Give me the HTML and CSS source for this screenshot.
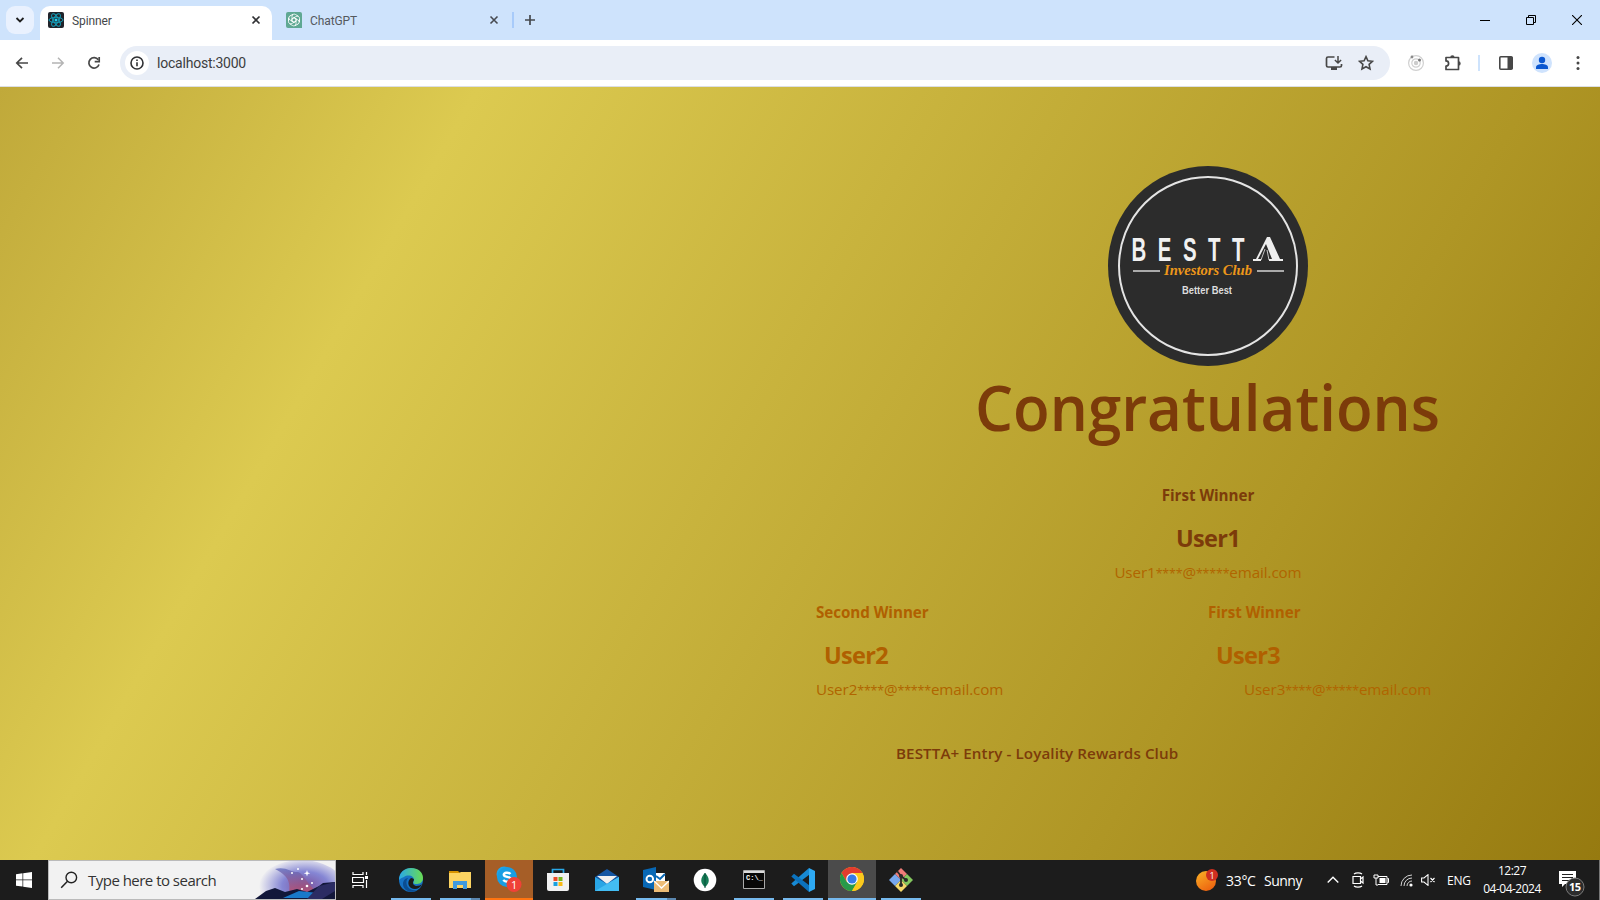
FILE: index.html
```html
<!DOCTYPE html>
<html lang="en">
<head>
<meta charset="utf-8">
<title>Spinner</title>
<link rel="stylesheet" href="styles.css">
</head>
<body>
<div class="screen">
  <header class="tabbar">
    <div class="tabsearch"><svg width="10" height="10" viewBox="0 0 10 10"><path d="M1.5 3l3.5 3.5L8.500 3" fill="none" stroke="#1f1f1f" stroke-width="1.8"/></svg></div>
    <div class="tab active">
      <svg width="16" height="16" viewBox="0 0 16 16"><rect width="16" height="16" rx="2" fill="#20232a"/><g fill="none" stroke="#149db8" stroke-width="1"><ellipse cx="8" cy="8" rx="7" ry="2.700"/><ellipse cx="8" cy="8" rx="7" ry="2.700" transform="rotate(60 8 8)"/><ellipse cx="8" cy="8" rx="7" ry="2.700" transform="rotate(120 8 8)"/></g><circle cx="8" cy="8" r="1.500" fill="#20d3f5"/></svg>
      <span class="tabname">Spinner</span>
      <svg width="10" height="10" viewBox="0 0 10 10"><path d="M1.500 1.500l7 7M8.500 1.500l-7 7" stroke="#303134" stroke-width="1.700"/></svg>
    </div>
    <div class="tab idle">
      <svg width="16" height="16" viewBox="0 0 16 16"><path d="M2 0h12a2 2 0 0 1 2 2v14H2a2 2 0 0 1-2-2V2a2 2 0 0 1 2-2z" fill="#5fa893"/><g fill="none" stroke="#fff" stroke-width=".85"><path id="p" d="M6 5.200V4.300a2.300 2.300 0 0 1 3.500-1.800L12.500 4.300M6 5.200v4l2 1.200"/><use href="#p" transform="rotate(60 8 8)"/><use href="#p" transform="rotate(120 8 8)"/><use href="#p" transform="rotate(180 8 8)"/><use href="#p" transform="rotate(240 8 8)"/><use href="#p" transform="rotate(300 8 8)"/></g></svg>
      <span class="tabname">ChatGPT</span>
      <svg width="10" height="10" viewBox="0 0 10 10"><path d="M1.500 1.500l7 7M8.500 1.500l-7 7" stroke="#474a50" stroke-width="1.600"/></svg>
    </div>
    <i class="tabsep"></i>
    <svg class="plus" width="12" height="12" viewBox="0 0 12 12"><path d="M6 1v10M1 6h10" stroke="#45494e" stroke-width="1.700"/></svg>
    <div class="winbtns">
      <svg width="10" height="10" viewBox="0 0 10 10"><path d="M0 5.500h10" stroke="#000"/></svg>
      <svg width="10" height="10" viewBox="0 0 10 10"><path d="M.5 2.500h7v7h-7zM2.500 2.500v-2h7v7h-2" fill="none" stroke="#000"/></svg>
      <svg width="10" height="10" viewBox="0 0 10 10"><path d="M0 0l10 10M10 0L0 10" stroke="#000" stroke-width="1.100"/></svg>
    </div>
  </header>
  <nav class="toolbar">
    <svg class="back" width="14" height="14" viewBox="0 0 14 14"><path d="M13 7H2.500M7 1.800L1.800 7 7 12.200" fill="none" stroke="#474747" stroke-width="1.700"/></svg>
    <svg class="fwd" width="14" height="14" viewBox="0 0 14 14"><path d="M1 7h10.500M7 1.800L12.200 7 7 12.200" fill="none" stroke="#b4b4b4" stroke-width="1.500"/></svg>
    <svg class="reload" width="14" height="14" viewBox="0 0 14 14"><path d="M11.300 3.800A5.200 5.200 0 1 0 12 8.500" fill="none" stroke="#474747" stroke-width="1.700"/><path d="M12.200 1v4.700H7.700" fill="none" stroke="#474747" stroke-width="1.700"/></svg>
    <div class="omnibox">
      <div class="info"><svg width="14" height="14" viewBox="0 0 14 14"><circle cx="7" cy="7" r="6" fill="none" stroke="#303134" stroke-width="1.600"/><path d="M7 6.200v4M7 3.600v1.500" stroke="#303134" stroke-width="1.600"/></svg></div>
      <span class="url">localhost:3000</span>
      <svg class="install" width="18" height="16" viewBox="0 0 18 16"><path d="M9.500 2H3a1.500 1.500 0 0 0-1.500 1.500v7A1.500 1.500 0 0 0 3 12h12a1.500 1.500 0 0 0 1.500-1.500V9" fill="none" stroke="#474747" stroke-width="1.700"/><path d="M6 12h6v3H6z" fill="#474747"/><path d="M13 1v7M9.900 5l3.100 3 3.100-3" fill="none" stroke="#474747" stroke-width="1.500"/></svg>
      <svg class="star" width="16" height="16" viewBox="0 0 16 16"><path d="M8 1.700l1.900 4.100 4.500.5-3.300 3.100.9 4.500L8 11.700l-4 2.200.9-4.500-3.300-3.100 4.500-.5z" fill="none" stroke="#474747" stroke-width="1.600"/></svg>
    </div>
    <svg class="ext" width="18" height="18" viewBox="0 0 18 18"><g fill="none" stroke="#d0d0d0" stroke-width="1.200"><circle cx="9" cy="9" r="7.400"/><circle cx="9" cy="9" r="4.200"/></g><circle cx="9" cy="9" r="2.200" fill="#ccc"/><circle cx="5" cy="3" r="1.400" fill="#8a8a8a"/><circle cx="12.500" cy="6" r="1.500" fill="#777"/></svg>
    <svg class="puzzle" width="18" height="18" viewBox="0 0 18 18"><path d="M2 3.500h12.500v12H2v-3.400a2.600 2.600 0 0 0 0-5.200z" fill="none" stroke="#474747" stroke-width="1.700" stroke-linejoin="round"/><path d="M6.200 3.500a2.200 2.200 0 0 1 4.400 0M14.500 7.200a2.200 2.200 0 0 1 0 4.400" fill="#474747"/></svg>
    <i class="toolsep"></i>
    <svg class="panel" width="14" height="14" viewBox="0 0 14 14"><rect x=".8" y=".8" width="12.400" height="12.400" rx="1" fill="none" stroke="#474747" stroke-width="1.600"/><path d="M8.500 1h5v12h-5z" fill="#474747"/></svg>
    <svg class="person" width="20" height="20" viewBox="0 0 20 20"><circle cx="10" cy="10" r="10" fill="#cfe3fd"/><circle cx="10" cy="7" r="3.200" fill="#0b57d0"/><path d="M4 16v-1.800c0-2 3.400-3.100 6-3.100s6 1.100 6 3.100V16z" fill="#0b57d0"/></svg>
    <svg class="dots" width="4" height="16" viewBox="0 0 4 16"><g fill="#474747"><circle cx="2" cy="2.500" r="1.500"/><circle cx="2" cy="8" r="1.500"/><circle cx="2" cy="13.500" r="1.500"/></g></svg>
  </nav>
  <main class="page">
    <section class="winners">
      <svg class="logo" width="200" height="200" viewBox="0 0 200 200">
        <circle cx="100" cy="100" r="100" fill="#2c2c2c"/><circle cx="100" cy="100" r="89" fill="none" stroke="#e4e4e4" stroke-width="2"/>
        <text class="brand" x="38" y="95" transform="scale(.62 1)">BESTT</text>
        <path d="M159 71h3l10 22h3v2h-14v-2h3l-6-15-8 15h3v2h-8v-2h3z" fill="#eee"/><path d="M157 83l-4 11M159 84l2 10" stroke="#eee" stroke-width=".8"/>
        <path d="M25 105h27M149 105h27" stroke="#aaa" stroke-width="2"/>
        <text class="script" x="56" y="109" textLength="88" lengthAdjust="spacingAndGlyphs">Investors Club</text>
        <text class="motto" x="74" y="128" textLength="50" lengthAdjust="spacingAndGlyphs">Better Best</text>
      </svg>
      <svg class="headline" width="480" height="100" viewBox="0 0 480 100"><text x="7" y="70" textLength="465" lengthAdjust="spacingAndGlyphs">Congratulations</text></svg>
      <div class="first">
        <h3>First Winner</h3>
        <h2>User1</h2>
        <p>User1<span class="mask">****</span>@<span class="mask">*****</span>email.com</p>
      </div>
      <div class="others">
        <div class="other">
          <h3>Second Winner</h3>
          <h2>User2</h2>
          <p>User2<span class="mask">****</span>@<span class="mask">*****</span>email.com</p>
        </div>
        <div class="other third">
          <h3>First Winner</h3>
          <h2>User3</h2>
          <p>User3<span class="mask">****</span>@<span class="mask">*****</span>email.com</p>
        </div>
      </div>
      <p class="club">BESTTA+ Entry - Loyality Rewards Club</p>
    </section>
  </main>
  <footer class="taskbar">
    <div class="start"><svg width="16" height="16" viewBox="0 0 16 16"><path d="M0 2.200l6.500-.9v6.200H0zM7.200 1.200L16 0v7.500H7.200zM0 8.300h6.500v6.300L0 13.700zM7.200 8.300H16V16l-8.800-1.200z" fill="#fff"/></svg></div>
    <div class="search">
      <svg class="glass" width="18" height="18" viewBox="0 0 18 18"><circle cx="11.300" cy="6.500" r="5.300" fill="none" stroke="#222" stroke-width="1.400"/><path d="M7.500 10.300L1.200 16.700" stroke="#222" stroke-width="1.500"/></svg>
      <span class="hint">Type here to search</span>
      <svg class="scene" width="80" height="38" viewBox="0 0 80 38"><defs><radialGradient id="sky" cx=".55" cy=".5" r=".55"><stop offset="0" stop-color="#7a529c"/><stop offset=".5" stop-color="#8586d4"/><stop offset="1" stop-color="#f2f2f2"/></radialGradient><linearGradient id="hill" x2="0" y2="1"><stop offset="0" stop-color="#5a68bd"/><stop offset="1" stop-color="#c8485c"/></linearGradient></defs><ellipse cx="46" cy="25" rx="42" ry="26" fill="url(#sky)"/><path d="M20 8c10-3 16 3 22 3 6 0 8 10 22 22H34c1-9 2-17-14-25z" fill="url(#hill)" opacity=".75"/><path d="M0 38l11-8 9-3 10 4 12-3 10 3 12-6 4-3 12-1v17z" fill="#12173a"/><path d="M28 37l16-7 19 2-6 5z" fill="#1979ca"/><path d="M52 38l12-13 16-4v9l-13 8z" fill="#2b2c63"/><g fill="#fff"><circle cx="37" cy="12" r="1"/><circle cx="43" cy="8" r="1"/><circle cx="47" cy="18" r="1"/><circle cx="52" cy="25" r="1.300"/><circle cx="57" cy="22" r="1"/><circle cx="47" cy="28" r="1"/><path d="M52 9l.8 2.500 2.500.8-2.500.8L52 15.500l-.8-2.400-2.500-.8 2.500-.8z"/></g></svg>
    </div>
    <div class="taskview"><svg width="17" height="16" viewBox="0 0 17 16"><path d="M1 0v2.500h10V0M1 16v-2.500h10V16M.5 5.500h11v5H.5zM14.500 0v3M14.500 8v8" fill="none" stroke="#fff" stroke-width="1.200"/><path d="M13 4h3v3h-3z" fill="#fff"/></svg></div>
    <div class="apps">
      <div class="app run"><svg width="24" height="24" viewBox="0 0 24 24"><defs><linearGradient id="eg"><stop offset="0" stop-color="#29a9e8"/><stop offset="1" stop-color="#69dc52"/></linearGradient></defs><circle cx="12" cy="12" r="12" fill="#1572c4"/><path d="M0 12C0 4 6 0 12 0c7 0 12 4 12 10 0 5-4 6-7 6-3 0-3-2-2-3 1-5-6-7-10-4-3 1-4 2-5 3z" fill="url(#eg)"/><path d="M9 10c-4 5 0 14 9 12-5 4-14 1-14-6 0-4 3-6 5-6z" fill="#0b4d91"/><path d="M15 12c-2 3-1 5 2 6 3 0 5-1 6-2-2 5-7 6-11 4-4-3-3-8 0-10 2 0 3 1 3 2z" fill="#1b1b1b"/></svg></div>
      <div class="app run multi"><svg width="22" height="20" viewBox="0 0 22 20"><path d="M0 1h9l2 2H0z" fill="#d79300"/><path d="M0 3h10l2-1h10v16H0z" fill="#fcd462"/><path d="M4 11h14v8h-4v-4H8v4H4z" fill="#3e9ade"/></svg></div>
      <div class="app skype"><svg width="26" height="26" viewBox="0 0 26 26"><circle cx="8" cy="8" r="7.500" fill="#20a6ea"/><circle cx="14" cy="14" r="7.500" fill="#0f83cb"/><circle cx="11" cy="11" r="10" fill="#189ee4"/><path d="M14.500 8c-2-2-7-1.500-6.700.8.300 2.800 7 1.400 7 4.500 0 3-5.300 3.200-7.600.7" fill="none" stroke="#fff" stroke-width="2.400"/><circle cx="18" cy="18.500" r="7.500" fill="#ef4137"/><text x="15" y="22.500" class="badge">1</text></svg></div>
      <div class="app"><svg width="24" height="24" viewBox="0 0 24 24"><path d="M6.500 6V1.500h11V6" fill="none" stroke="#29a9e8" stroke-width="1.700"/><path d="M1 5h22v16a2 2 0 0 1-2 2H3a2 2 0 0 1-2-2z" fill="#f1f1f1"/><path d="M7.500 9h4v4h-4z" fill="#ef4d28"/><path d="M12.500 9h4v4h-4z" fill="#78b61c"/><path d="M7.500 14h4v4h-4z" fill="#18a0df"/><path d="M12.500 14h4v4h-4z" fill="#f9b914"/></svg></div>
      <div class="app"><svg width="24" height="24" viewBox="0 0 24 24"><path d="M0 9l12-8 12 8v14H0z" fill="#1456a3"/><path d="M2 8h20l-10 8z" fill="#f0f0f0"/><path d="M0 9l12 7 12-7v14H0z" fill="#29a5e5"/><path d="M0 23L24 9v14z" fill="#43bdf3"/></svg></div>
      <div class="app run multi"><svg width="26" height="26" viewBox="0 0 26 26"><path d="M0 3l13-3v23L0 20z" fill="#0868b5"/><circle cx="6.800" cy="12" r="3.300" fill="none" stroke="#fff" stroke-width="1.900"/><path d="M13 6h9v12h-9z" fill="#fff"/><path d="M13 9l4 3 5-5" fill="none" stroke="#0868b5" stroke-width="2"/><path d="M11 14h15v11H11z" fill="#edbc76"/><path d="M11 14l7.500 7 7.500-7" fill="none" stroke="#fff" stroke-width="1.300"/></svg></div>
      <div class="app"><svg width="24" height="24" viewBox="0 0 24 24"><circle cx="12" cy="12" r="11.300" fill="#fff"/><path d="M12 5c5 5 5 10 0 14-5-4-5-9 0-14z" fill="#177c57"/><path d="M12 5v15" stroke="#064c39"/></svg></div>
      <div class="app run"><svg width="22" height="20" viewBox="0 0 22 20"><path d="M.5.500h21v18H.5z" fill="#080808" stroke="#aaa"/><path d="M1 1h20v2H1z" fill="#dcdcdc"/><text x="3" y="10" class="cmd">C:\_</text></svg></div>
      <div class="app run"><svg width="24" height="24" viewBox="0 0 24 24"><path d="M18 0l.5 6.500L3 18.300.300 15.500z" fill="#178ad4"/><path d="M18 24l.5-6.500L3 5.700.300 8.500z" fill="#0b72bd"/><path d="M18 0l6 3v18l-6 3z" fill="#2eaaf4"/></svg></div>
      <div class="app chrome"><svg width="24" height="24" viewBox="0 0 24 24"><circle cx="12" cy="12" r="12" fill="#fbc91d"/><path d="M1.600 6a12 12 0 0 1 20.800 0H12l-5.200 9z" fill="#e33c2e"/><path d="M1.600 6a12 12 0 0 0 10.400 18l5.200-9H6.800z" fill="#279a49"/><path d="M12 6h10.400A12 12 0 0 1 12 24l5.200-9z" fill="#fbc91d"/><circle cx="12" cy="12" r="5.800" fill="#fff"/><circle cx="12" cy="12" r="4.600" fill="#367be8"/></svg></div>
      <div class="app run"><svg width="24" height="24" viewBox="0 0 24 24"><path d="M12 0l6 6-6 6-6-6z" fill="#ef7c78"/><path d="M6 6l6 6-6 6-6-6z" fill="#77a7ee"/><path d="M18 6l6 6-6 6-6-6z" fill="#83c75e"/><path d="M12 12l6 6-6 6-6-6z" fill="#f5d96b"/><path d="M8 3l4 5v9M12 8l5 4" stroke="#292929" stroke-width="1.800" fill="none"/><g fill="#292929"><circle cx="12" cy="8" r="2"/><circle cx="17" cy="12" r="2"/><circle cx="12" cy="17" r="2"/></g></svg></div>
    </div>
    <div class="tray">
      <svg class="weather" width="24" height="24" viewBox="0 0 24 24"><defs><linearGradient id="sun" x2=".6" y2="1"><stop offset="0" stop-color="#fbb326"/><stop offset="1" stop-color="#ed6510"/></linearGradient></defs><circle cx="10" cy="13" r="10" fill="url(#sun)"/><circle cx="16" cy="7" r="6" fill="#cf2f20"/><text x="13.500" y="10.500" class="alert">1</text></svg>
      <span class="temp">33°C</span><span class="sunny">Sunny</span>
      <svg class="chev" width="12" height="8" viewBox="0 0 12 8"><path d="M.7 6.500L6 1.300l5.300 5.200" fill="none" stroke="#fff" stroke-width="1.400"/></svg>
      <svg class="meet" width="12" height="16" viewBox="0 0 12 16"><path d="M1 4.500h7.500v7H1zM8.500 7l2.500-2v6L8.500 9M2 2c2-1.500 6-1.500 8 0M2 14c2 1.500 6 1.500 8 0" fill="none" stroke="#fff" stroke-width="1.200"/></svg>
      <svg class="battery" width="16" height="12" viewBox="0 0 16 12"><path d="M5 2.500h9v8H5M14.500 4.500h1v4h-1M1 1v3h4V1M3 4v7h2M2 0v2M4 0v2" fill="none" stroke="#fff"/><path d="M6.500 4h6v5h-6z" fill="#fff"/></svg>
      <svg class="wifi" width="13" height="13" viewBox="0 0 13 13"><g fill="none" stroke="#d4d4d4"><path d="M1 12A11 11 0 0 1 12 1M4 12a8 8 0 0 1 8-8M7 12a5 5 0 0 1 5-5"/></g><circle cx="11" cy="11" r="1.600" fill="#fff"/></svg>
      <svg class="mute" width="15" height="12" viewBox="0 0 15 12"><path d="M.6 4H3l4-3.300v10.600L3 8H.6zM9.500 4l4 4M13.500 4l-4 4" fill="none" stroke="#fff" stroke-width="1.100"/></svg>
      <span class="lang">ENG</span>
      <div class="clock"><span>12:27</span><span>04-04-2024</span></div>
      <svg class="note" width="26" height="26" viewBox="0 0 26 26"><path d="M0 0h17v13H6l-3 3v-3H0z" fill="#fff"/><path d="M3 3.500h11M3 6.500h11M3 9.500h7" stroke="#222" stroke-width="1.100"/><circle cx="16" cy="16" r="9" fill="#2c2c2c" stroke="#7b7b7b"/><text x="10" y="20" class="count">15</text></svg>
      <i class="edge"></i>
    </div>
  </footer>
</div>
</body>
</html>
```
FILE: styles.css
```css
* { box-sizing: border-box; }
body { margin: 0; font-family: "Open Sans", "Noto Sans", sans-serif; }
svg { display: block; flex: none; }
h2, h3, p { margin: 0; }
.screen { width: 1600px; height: 900px; display: flex; flex-direction: column; overflow: hidden; }
.tabbar { height: 40px; background: #cee3fc; display: flex; padding-left: 6px; flex: none; }
.tabsearch { width: 28px; height: 28px; margin-top: 6px; border-radius: 9px; background: #e9f1fe; display: grid; place-items: center; }
.tab { display: flex; align-items: center; font-family: Roboto, sans-serif; font-size: 12px; }
.tab.active { width: 232px; height: 34px; margin: 6px 0 0 6px; background: #fff; border-radius: 10px 10px 0 0; padding: 0 11px 6px 8px; color: #45474a; }
.tab.idle { width: 229px; padding: 0 2px 0 14px; margin-right: 5px; color: #55595e; }
.tabname { flex: 1; margin: 2px 0 0 8px; letter-spacing: -.1px; }
.tabsep { width: 2px; height: 16px; margin: 12px 10px 0 6px; background: #a8cbfa; }
.plus { margin-top: 14px; }
.winbtns { display: flex; gap: 36px; margin: 15px 18px 0 auto; }
.toolbar { height: 47px; background: #fff; border-bottom: 1px solid #dcdfe4; display: flex; align-items: center; padding: 0 20px 0 15px; flex: none; }
.fwd { margin-left: 22px; }
.reload { margin-left: 22px; }
.omnibox { width: 1270px; height: 34px; margin-left: 19px; border-radius: 17px; background: #e9eef7; display: flex; align-items: center; padding: 0 16px 0 5px; }
.info { width: 24px; height: 24px; border-radius: 50%; background: #fff; display: grid; place-items: center; }
.url { margin-left: 8px; font: 14px Roboto, sans-serif; letter-spacing: -.22px; color: #3c3d40; flex: 1; }
.star { margin-left: 15px; }
.ext { margin-left: 17px; }
.puzzle { margin-left: 19px; }
.toolsep { width: 2px; height: 16px; margin-left: 16px; background: #cee3fc; }
.panel { margin-left: 19px; }
.person { margin-left: 19px; }
.dots { margin-left: auto; }
.page { height: 773px; flex: none; background: linear-gradient(120deg, #c0a93a 0%, #dcca50 23.4%, #af9625 75%, #967a10 100%); padding: 79px 0 0 816px; }
.winners { width: 784px; display: flex; flex-direction: column; align-items: center; color: #7c3b0a; }
.headline { margin-top: -5px; }
.headline text { font: 600 64px "Open Sans", sans-serif; fill: #7c3b0a; }
.logo text { fill: #f1f1f1; }
.logo .brand { font: bold 33px "Liberation Sans", sans-serif; letter-spacing: 18.5px; }
.logo .script { font: italic bold 14px "Liberation Serif", serif; fill: #ed971a; }
.logo .motto { font: bold 10px "Liberation Sans", sans-serif; fill: #ddd; }
.winners h3 { font-size: 15.2px; line-height: 24px; letter-spacing: -.05px; }
.winners h2 { font-size: 23.5px; line-height: 32px; letter-spacing: -.7px; }
.winners p { font-size: 15.2px; line-height: 24px; letter-spacing: -.1px; }
.winners .mask { font-size: 12.500px; letter-spacing: -.2px; line-height: 1; }
.first { text-align: center; margin-top: 22px; }
.first h2, .other h2 { margin-top: 15px; }
.first p, .other p { margin-top: 6px; color: #b06500; }
.others { width: 784px; display: grid; grid-template-columns: 392px 392px; margin-top: 16px; color: #b06000; }
.other h2 { padding-left: 8px; }
.third p { padding-left: 36px; }
.winners .club { align-self: flex-start; margin: 40px 0 0 80px; font-weight: 600; font-size: 15.2px; letter-spacing: .08px; }
.taskbar { height: 40px; flex: none; background: #1c1c1c; display: flex; }
.start { width: 48px; display: grid; place-items: center; }
.search { width: 288px; background: #f2f2f2; border: 1px solid #bbb; display: flex; align-items: center; }
.glass { margin-left: 11px; }
.hint { font-size: 15px; letter-spacing: -.52px; margin-left: 10px; flex: 1; color: #333; white-space: nowrap; }
.taskview { width: 49px; display: grid; place-items: center; }
.apps { display: flex; gap: 1px; margin-left: 2px; }
.app { width: 48px; display: grid; place-items: center; }
.run { background: linear-gradient(#76b9ed, #76b9ed) 50% 100% / 40px 2px no-repeat; }
.multi { background: linear-gradient(90deg, #76b9ed 31px, #5b87af 31px) 50% 100% / 40px 2px no-repeat; }
.skype { background: #a65e27; border-bottom: 2px solid #ff7410; }
.chrome { background: #4b4b4b; border-bottom: 2px solid #76b9ed; }
.badge { font: 11px "Open Sans", sans-serif; fill: #fff; }
.cmd { font: bold 7px "Liberation Mono", monospace; fill: #fff; }
.tray { display: flex; align-items: center; margin-left: auto; color: #fff; font-size: 14px; width: 404px; }
.alert { font: 9px "Open Sans", sans-serif; fill: #fff; }
.temp { width: 38px; margin-left: 6px; letter-spacing: -.3px; }
.sunny { width: 63px; letter-spacing: -.5px; }
.meet { margin-left: 13px; }
.battery { margin-left: 9px; }
.wifi { margin-left: 11px; }
.mute { margin-left: 8px; }
.lang { margin-left: 11px; width: 36px; font-size: 12px; letter-spacing: -.2px; }
.clock { width: 58px; display: flex; flex-direction: column; align-items: center; font-size: 12px; line-height: 18px; letter-spacing: -.5px; white-space: nowrap; }
.note { margin: 8px 0 0 18px; }
.count { font: bold 11px "Open Sans", sans-serif; fill: #fff; letter-spacing: -.5px; }
.edge { width: 1px; height: 40px; background: #777; margin-left: auto; }
```
